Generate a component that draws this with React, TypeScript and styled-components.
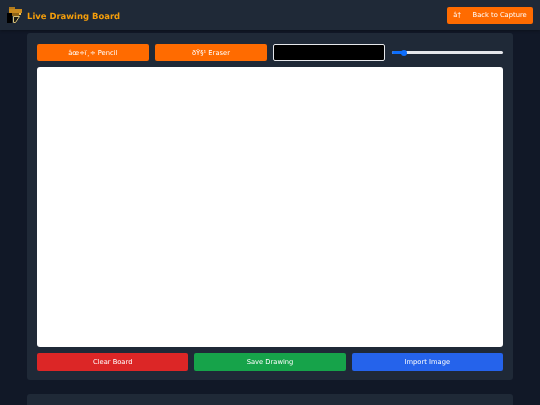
import React from "react";
import styled, { createGlobalStyle } from "styled-components";

const Global = createGlobalStyle`
  html, body { margin: 0; padding: 0; background: #111827; overflow: hidden; }
  body { font-family: "DejaVu Sans", sans-serif; color: #fff; text-rendering: geometricPrecision; }
  * { box-sizing: border-box; }
`;

const Page = styled.div`
  width: 540px;
  height: 405px;
  overflow: hidden;
  background: #111827;
  filter: blur(0.3px);
`;

const Header = styled.header`
  height: 30px;
  background: #1f2937;
  display: flex;
  align-items: center;
  justify-content: space-between;
  padding: 0 7px;
  box-shadow: 0 1px 3px rgba(0, 0, 0, 0.3);
`;

const Brand = styled.div`
  display: flex;
  align-items: center;
  gap: 4px;
`;

const Title = styled.h1`
  margin: 1px 0 0;
  font-size: 8.45px;
  font-weight: 700;
  color: #f59e0b;
`;

const Button = styled.button<{ $bg: string }>`
  height: ${(p) => (p.$bg === "#ff6b00" ? "17px" : "18px")};
  border: none;
  border-radius: 2px;
  background: ${(p) => p.$bg};
  color: #fff;
  font-family: "DejaVu Sans", sans-serif;
  font-size: 6.72px;
  text-rendering: geometricPrecision;
  padding: 0;
  white-space: pre;
`;

const BackButton = styled(Button)`
  width: 86px;
`;

const Panel = styled.section`
  width: 486px;
  margin: 3px auto 0;
  background: #1f2937;
  border-radius: 3px;
  padding: 11px 10px 9px;
`;

const Toolbar = styled.div`
  display: grid;
  grid-template-columns: repeat(4, 1fr);
  gap: 6.5px;
  align-items: center;
`;

const Swatch = styled.div`
  height: 17px;
  background: #000;
  border: 1px solid #e5e7eb;
  border-radius: 2px;
`;

const Track = styled.div`
  position: relative;
  height: 3px;
  margin-left: 1px;
  background: #e5e7eb;
  border-radius: 2px;
`;

const TrackFill = styled.div`
  height: 3px;
  width: 12px;
  background: #0d6efd;
  border-radius: 2px 0 0 2px;
`;

const Thumb = styled.div`
  position: absolute;
  left: 9px;
  top: -1.5px;
  width: 6px;
  height: 6px;
  border-radius: 50%;
  background: #0d6efd;
`;

const Board = styled.div`
  height: 280px;
  margin: 6px 0;
  background: #fff;
  border-radius: 3px;
`;

const Actions = styled.div`
  display: grid;
  grid-template-columns: repeat(3, 1fr);
  gap: 6px;
`;

const NextPanel = styled.section`
  width: 486px;
  height: 40px;
  margin: 14px auto 0;
  background: #1f2937;
  border-radius: 3px;
`;

const Logo = () => (
  <svg width="16" height="17" viewBox="0 0 16 17" aria-hidden="true">
    <rect x="0" y="6" width="5" height="10" fill="#000" />
    <rect x="2" y="0" width="6" height="2" fill="#b07a1c" />
    <rect x="2" y="2" width="13" height="4" fill="#c98a1e" />
    <rect x="5" y="6" width="7" height="3" fill="#8f6418" />
    <rect x="12" y="6" width="2" height="2" fill="#f5c04a" />
    <path d="M6.5 9.5 L12.5 9.5 L8.5 15.5 L6.5 15.5 Z" fill="#1c1c14" stroke="#d8c178" strokeWidth="1" />
  </svg>
);

export default function App() {
  return (
    <Page>
      <Global />
      <Header>
        <Brand>
          <Logo />
          <Title>Live Drawing Board</Title>
        </Brand>
        <BackButton $bg="#ff6b00">{"â†\u0090   Back to Capture"}</BackButton>
      </Header>
      <Panel>
        <Toolbar>
          <Button $bg="#ff6b00">{"âœ÷ï¸÷ Pencil"}</Button>
          <Button $bg="#ff6b00">{"ðŸ§¹ Eraser"}</Button>
          <Swatch />
          <Track>
            <TrackFill />
            <Thumb />
          </Track>
        </Toolbar>
        <Board />
        <Actions>
          <Button $bg="#dc2626">Clear Board</Button>
          <Button $bg="#16a34a">Save Drawing</Button>
          <Button $bg="#2563eb">Import Image</Button>
        </Actions>
      </Panel>
      <NextPanel />
    </Page>
  );
}
